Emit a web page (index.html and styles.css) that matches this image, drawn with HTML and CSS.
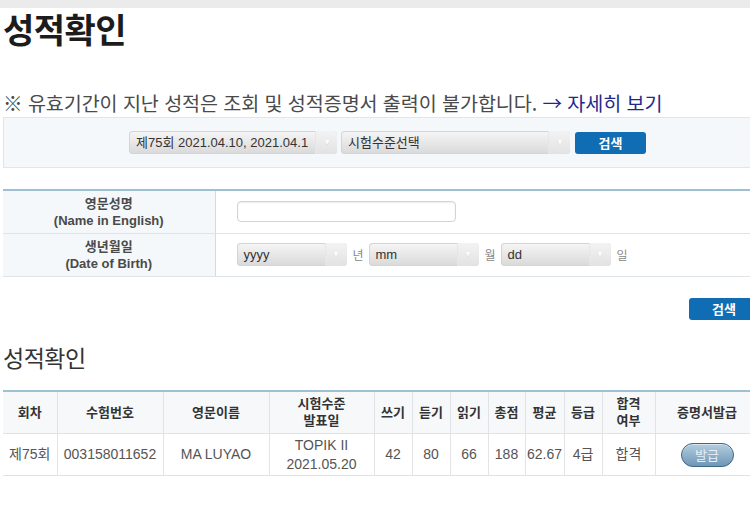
FILE: index.html
```html
<!DOCTYPE html>
<html lang="ko">
<head>
  <meta charset="UTF-8">
  <title>성적확인</title>
  <link rel="stylesheet" href="styles.css">
</head>
<body>
  <div class="topbar"></div>
  <div class="page">
    <h1 class="title">성적확인</h1>

    <p class="notice">※ 유효기간이 지난 성적은 조회 및 성적증명서 출력이 불가합니다. <a class="more">→ 자세히 보기</a></p>

    <div class="search-box">
      <div class="select select-round"><span class="select-text">제75회 2021.04.10, 2021.04.1</span><span class="arrow"></span></div>
      <div class="select select-level"><span class="select-text">시험수준선택</span><span class="arrow"></span></div>
      <button class="btn">검색</button>
    </div>

    <table class="form-table">
      <tr>
        <th>영문성명<br>(Name in English)</th>
        <td><div class="text-input"></div></td>
      </tr>
      <tr>
        <th>생년월일<br>(Date of Birth)</th>
        <td>
          <div class="birth">
            <div class="select select-date"><span class="select-text">yyyy</span><span class="arrow"></span></div>
            <span class="unit">년</span>
            <div class="select select-date"><span class="select-text">mm</span><span class="arrow"></span></div>
            <span class="unit">월</span>
            <div class="select select-date"><span class="select-text">dd</span><span class="arrow"></span></div>
            <span class="unit">일</span>
          </div>
        </td>
      </tr>
    </table>

    <div class="btn-row">
      <button class="btn btn-edge">검색</button>
    </div>

    <h2 class="subtitle">성적확인</h2>

    <table class="result-table">
      <colgroup>
        <col style="width: 54px">
        <col style="width: 106px">
        <col style="width: 106px">
        <col style="width: 105px">
        <col style="width: 38px">
        <col style="width: 38px">
        <col style="width: 38px">
        <col style="width: 37px">
        <col style="width: 39px">
        <col style="width: 38px">
        <col style="width: 53px">
        <col style="width: 104px">
      </colgroup>
      <thead>
        <tr>
          <th>회차</th>
          <th>수험번호</th>
          <th>영문이름</th>
          <th>시험수준<br>발표일</th>
          <th>쓰기</th>
          <th>듣기</th>
          <th>읽기</th>
          <th>총점</th>
          <th>평균</th>
          <th>등급</th>
          <th>합격<br>여부</th>
          <th>증명서발급</th>
        </tr>
      </thead>
      <tbody>
        <tr>
          <td>제75회</td>
          <td>003158011652</td>
          <td>MA LUYAO</td>
          <td>TOPIK II<br>2021.05.20</td>
          <td>42</td>
          <td>80</td>
          <td>66</td>
          <td>188</td>
          <td>62.67</td>
          <td>4급</td>
          <td>합격</td>
          <td><button class="issue">발급</button></td>
        </tr>
      </tbody>
    </table>
  </div>
</body>
</html>
```

FILE: styles.css
```css
* {
  margin: 0;
  padding: 0;
  box-sizing: border-box;
}

body {
  font-family: "Liberation Sans", "Noto Sans CJK KR", sans-serif;
  color: #333;
  background: #fff;
  width: 750px;
  height: 508px;
  overflow: hidden;
}

.topbar {
  height: 8px;
  background: #ebebeb;
}

.page {
  padding-left: 3px;
  width: 790px;
}

/* Headings */
.title {
  font-family: "Noto Sans CJK KR", sans-serif;
  font-size: 34px;
  font-weight: 700;
  line-height: 40px;
  color: #1c1c1c;
  letter-spacing: -0.5px;
  margin-top: 1px;
}

.notice {
  font-family: "Noto Sans CJK KR", sans-serif;
  font-size: 19.6px;
  line-height: 24px;
  color: #4a4a4a;
  margin-top: 42px;
  letter-spacing: -0.1px;
}

.more {
  color: #1d2a8c;
}

/* Search box */
.search-box {
  height: 51px;
  margin-top: 2px;
  border: 1px solid #e2e6e9;
  background: #f5f8fa;
  display: flex;
  align-items: center;
  gap: 4px;
  padding-left: 125px;
}

.select {
  height: 23px;
  display: flex;
  align-items: stretch;
  border-radius: 4px;
  background: linear-gradient(#f6f6f6, #d9d9d9);
  box-shadow: inset 0 0 0 1px #d4d4d4;
  font-size: 13px;
  color: #333;
  overflow: hidden;
}

.select-text {
  flex: 1;
  padding-left: 7px;
  line-height: 23px;
  white-space: nowrap;
  overflow: hidden;
}

.arrow {
  width: 22px;
  flex: none;
  border-left: 1px solid #e6e6e6;
  background: linear-gradient(#f3f3f3, #e2e2e2);
  display: flex;
  align-items: center;
  justify-content: center;
}

.arrow::after {
  content: '';
  border-top: 5px solid #fbfbfb;
  border-left: 3.5px solid transparent;
  border-right: 3.5px solid transparent;
  filter: drop-shadow(0 0 0.6px #aaa);
}

.select-round {
  width: 208px;
}

.select-level {
  width: 229px;
}

.btn {
  height: 22px;
  width: 71px;
  border: none;
  border-radius: 3px;
  background: #106db3;
  color: #fff;
  font-family: "Noto Sans CJK KR", sans-serif;
  font-size: 13px;
  font-weight: 700;
  margin-left: 1px;
}

/* Form table */
.form-table {
  margin-top: 21px;
  width: 100%;
  border-collapse: collapse;
  border-top: 2px solid #9fbfd2;
}

.form-table th {
  width: 212px;
  height: 43px;
  background: #f5f8fa;
  border-bottom: 1px solid #dfe4e8;
  border-right: 1px solid #d6dbe0;
  font-size: 13px;
  font-weight: 700;
  color: #4a4a4a;
  line-height: 17px;
  text-align: center;
}

.form-table td {
  border-bottom: 1px solid #dfe4e8;
  padding-left: 21px;
}

.text-input {
  width: 219px;
  height: 21px;
  border: 1px solid #d3d3d3;
  border-radius: 4px;
  background: #fff;
  box-shadow: inset 0 1px 2px #eee;
}

.birth {
  display: flex;
  align-items: center;
  gap: 6px;
}

.select-date {
  width: 110px;
}

.unit {
  font-family: "Noto Sans CJK KR", sans-serif;
  font-size: 12px;
  color: #888;
  width: 10px;
}

/* Second search button */
.btn-row {
  display: flex;
  padding-left: 686px;
  margin-top: 21px;
}

.btn-edge {
  width: 70px;
  margin: 0;
}

.subtitle {
  font-family: "Noto Sans CJK KR", sans-serif;
  font-size: 23px;
  font-weight: 400;
  color: #333;
  line-height: 28px;
  margin-top: 23px;
  letter-spacing: -0.5px;
}

/* Result table */
.result-table {
  margin-top: 19px;
  border-collapse: collapse;
  table-layout: fixed;
  width: 756px;
  border-top: 2px solid #9fbfd2;
}

.result-table th {
  height: 43px;
  background: #f6f8fa;
  font-size: 13px;
  font-weight: 700;
  color: #333;
  line-height: 17px;
  border-right: 1px solid #dfe3e6;
  border-bottom: 1px solid #dfe3e6;
  text-align: center;
}

.result-table td {
  height: 42px;
  font-size: 14px;
  color: #555;
  line-height: 19px;
  text-align: center;
  white-space: nowrap;
  border-right: 1px solid #e2e5e8;
  border-bottom: 1px solid #dfe3e6;
}

.issue {
  width: 53px;
  height: 24px;
  border-radius: 12px;
  border: 1px solid #3f6786;
  background: linear-gradient(#b3cde0, #6f97b6);
  color: #e6eef5;
  font-family: "Noto Sans CJK KR", sans-serif;
  font-size: 13px;
  box-shadow: inset 0 1px 0 rgba(255,255,255,0.5);
}
```
